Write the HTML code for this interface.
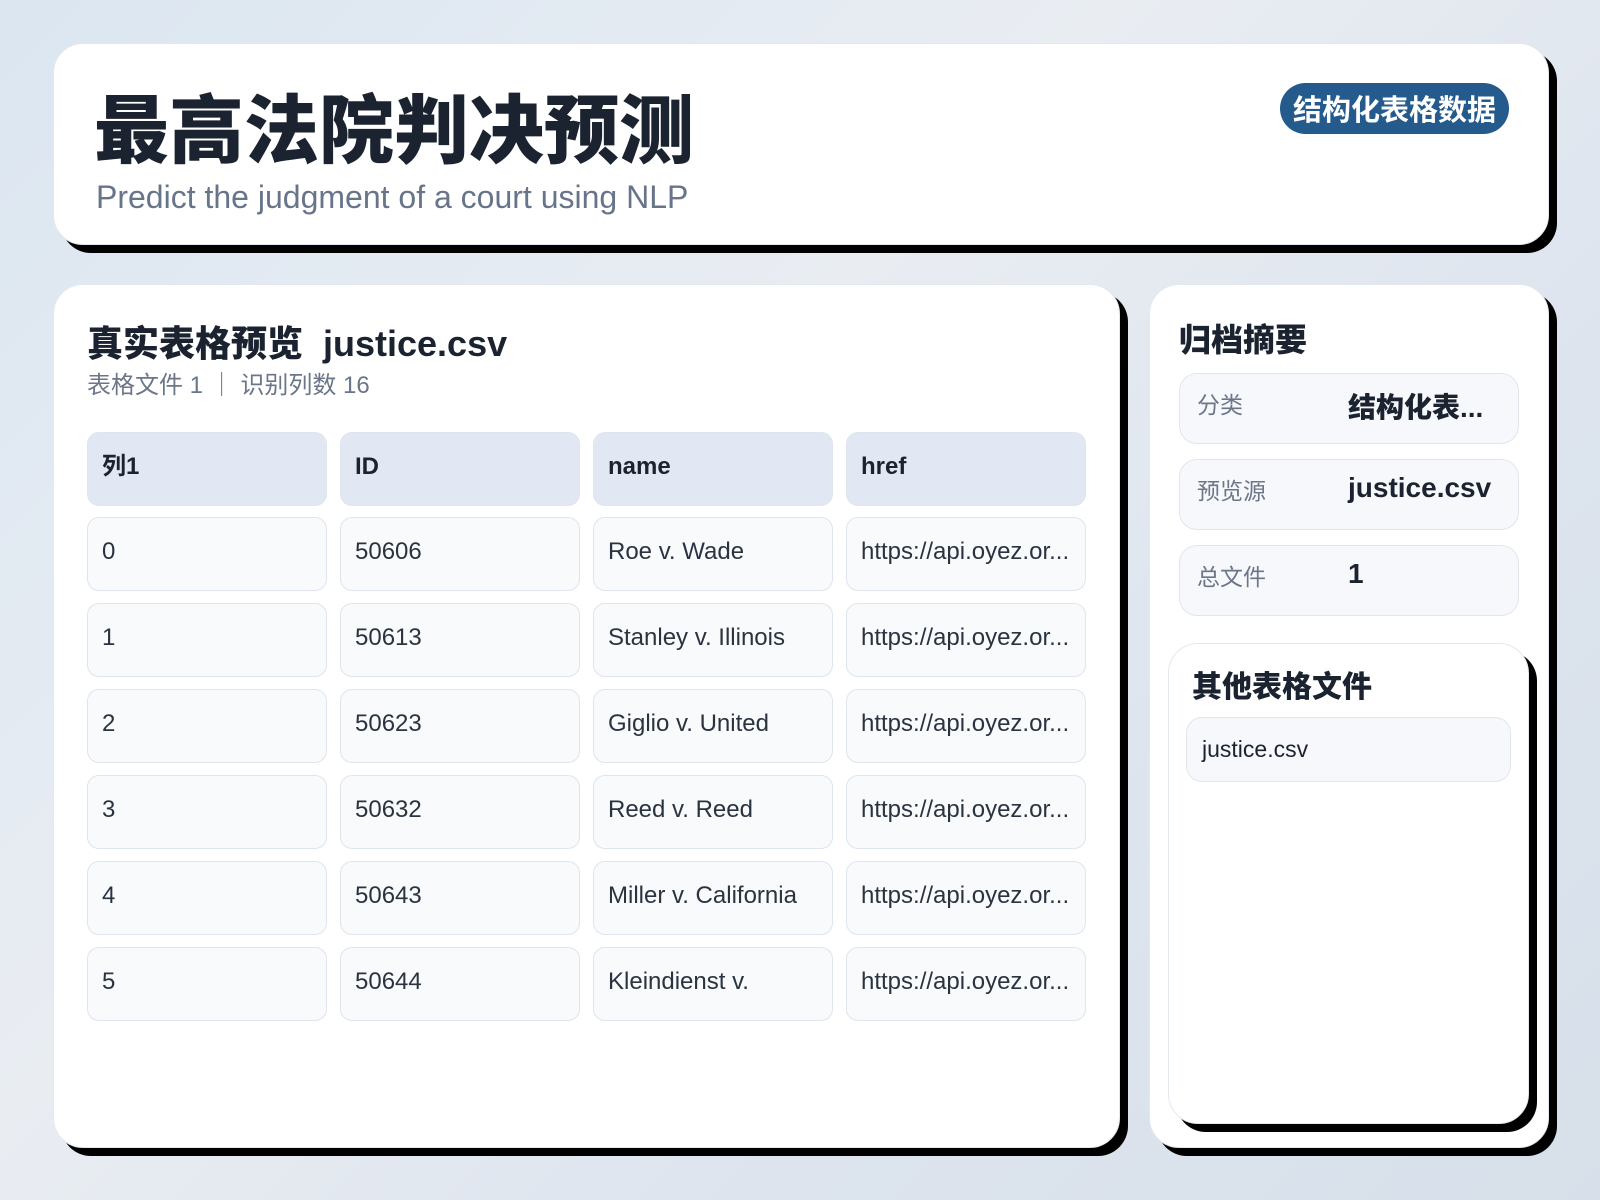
<!DOCTYPE html>
<html><head><meta charset="utf-8"><style>
*{box-sizing:border-box;margin:0;padding:0}
body{width:1600px;height:1200px;overflow:hidden;font-family:"Liberation Sans","Noto Sans CJK SC",sans-serif;color:#1b2330;background:linear-gradient(135deg,#dbe6f1 0%,#e9edf2 40%,#dde4ee 70%,#d7e0ea 100%);position:relative}
.card{position:absolute;background:#fff;border:1px solid #e3e8ef;border-radius:30px;box-shadow:8px 8px 0 #000}
.hdr{left:53px;top:43px;width:1496px;height:202px}
.hdr h1{position:absolute;left:40px;top:42px;font-size:75px;font-weight:900;line-height:90px}
.hdr p{position:absolute;left:42px;top:135px;font-size:32px;color:#68748a}
.badge{position:absolute;left:1226px;top:39px;width:229px;height:51px;border-radius:26px;background:#245a8c;color:#fff;font-size:29px;font-weight:700;text-align:center;line-height:57px}
.main{left:53px;top:284px;width:1067px;height:864px}
.main h2{position:absolute;left:33px;top:30px;font-size:36px;font-weight:900}
.main .sub{position:absolute;left:33px;top:80px;font-size:24px;color:#6b7689}
.c{position:absolute;width:240px;height:74px;border-radius:12px;border:1px solid #dfe5ee;background:#f8fafc;font-size:24px;padding-left:14px;line-height:68px;white-space:nowrap;overflow:hidden;color:#2a3340}
.c.h{background:#e1e8f3;font-weight:700;color:#1b2330;line-height:68px}
.side{left:1149px;top:284px;width:400px;height:864px;box-shadow:8px 8px 0 #000}
.side h3{position:absolute;left:29px;top:30px;font-size:32px;font-weight:900}
.kv{position:absolute;left:29px;width:340px;height:71px;border-radius:18px;border:1px solid #e1e6ee;background:#f6f8fb}
.kv .k{position:absolute;left:17px;top:12px;font-size:23px;color:#6b7689}
.kv .v{position:absolute;left:168px;top:12px;font-size:28px;font-weight:800}
.inner{left:18px;top:358px;width:361px;height:481px;border-radius:30px}
.inner h4{position:absolute;left:23px;top:18px;font-size:30px;font-weight:900}
.file{position:absolute;left:17px;top:73px;width:325px;height:65px;border-radius:16px;border:1px solid #e1e6ee;background:#f6f8fb;font-size:23px;padding-left:15px;line-height:63px}
</style></head><body>
<div class="card hdr"><h1>最高法院判决预测</h1><p>Predict the judgment of a court using NLP</p><div class="badge">结构化表格数据</div></div>
<div class="card main"><h2>真实表格预览&nbsp; justice.csv</h2><div class="sub">表格文件 1 ｜ 识别列数 16</div>
<div class="c h" style="left:33px;top:147px">列1</div><div class="c h" style="left:286px;top:147px">ID</div><div class="c h" style="left:539px;top:147px">name</div><div class="c h" style="left:792px;top:147px">href</div>
<div class="c" style="left:33px;top:232px">0</div><div class="c" style="left:286px;top:232px">50606</div><div class="c" style="left:539px;top:232px">Roe v. Wade</div><div class="c" style="left:792px;top:232px">https://api.oyez.or...</div>
<div class="c" style="left:33px;top:318px">1</div><div class="c" style="left:286px;top:318px">50613</div><div class="c" style="left:539px;top:318px">Stanley v. Illinois</div><div class="c" style="left:792px;top:318px">https://api.oyez.or...</div>
<div class="c" style="left:33px;top:404px">2</div><div class="c" style="left:286px;top:404px">50623</div><div class="c" style="left:539px;top:404px">Giglio v. United</div><div class="c" style="left:792px;top:404px">https://api.oyez.or...</div>
<div class="c" style="left:33px;top:490px">3</div><div class="c" style="left:286px;top:490px">50632</div><div class="c" style="left:539px;top:490px">Reed v. Reed</div><div class="c" style="left:792px;top:490px">https://api.oyez.or...</div>
<div class="c" style="left:33px;top:576px">4</div><div class="c" style="left:286px;top:576px">50643</div><div class="c" style="left:539px;top:576px">Miller v. California</div><div class="c" style="left:792px;top:576px">https://api.oyez.or...</div>
<div class="c" style="left:33px;top:662px">5</div><div class="c" style="left:286px;top:662px">50644</div><div class="c" style="left:539px;top:662px">Kleindienst v.</div><div class="c" style="left:792px;top:662px">https://api.oyez.or...</div>
</div>
<div class="card side"><h3>归档摘要</h3>
<div class="kv" style="top:88px"><span class="k">分类</span><span class="v">结构化表...</span></div>
<div class="kv" style="top:174px"><span class="k">预览源</span><span class="v">justice.csv</span></div>
<div class="kv" style="top:260px"><span class="k">总文件</span><span class="v">1</span></div>
<div class="card inner"><h4>其他表格文件</h4><div class="file">justice.csv</div></div>
</div>
</body></html>
